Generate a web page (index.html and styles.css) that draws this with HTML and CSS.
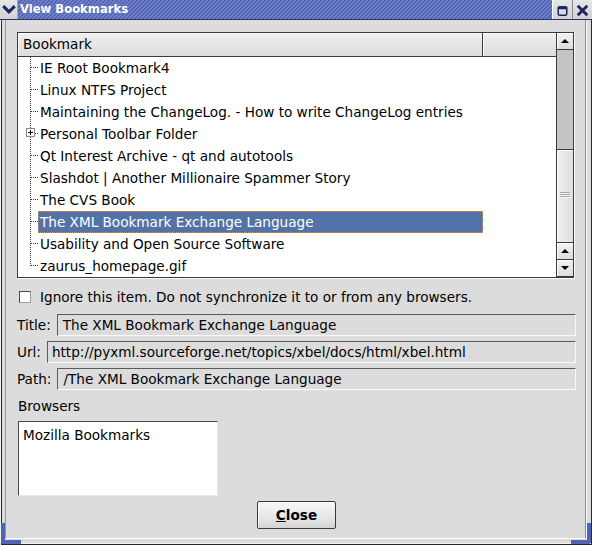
FILE: index.html
```html
<!DOCTYPE html>
<html>
<head>
<meta charset="utf-8">
<title>View Bookmarks</title>
<link rel="stylesheet" href="styles.css">
</head>
<body>
<div class="window">
  <div class="titlebar">
    <div class="tb-btn menu">
      <svg width="18" height="19" viewBox="0 0 18 19"><path d="M4.5 7 L9.5 12 L14.5 7" fill="none" stroke="#1c2660" stroke-width="3.2" stroke-linecap="square"/></svg>
    </div>
    <div class="title">View Bookmarks</div>
    <div class="tb-btn max">
      <svg width="20" height="19" viewBox="0 0 20 19"><rect x="5.5" y="7" width="9" height="8.5" rx="1.5" fill="none" stroke="#1c2660" stroke-width="1.6"/><rect x="5" y="6.2" width="10" height="3" rx="1" fill="#1c2660"/></svg>
    </div>
    <div class="tb-btn close">
      <svg width="20" height="19" viewBox="0 0 20 19"><path d="M6 6.5 L14 14.5 M14 6.5 L6 14.5" stroke="#1c2660" stroke-width="3" stroke-linecap="square"/></svg>
    </div>
  </div>
  <div class="frame">
    <div class="client">
      <div class="listview">
        <div class="lv-main">
          <div class="lv-header">
            <div class="col col1">Bookmark</div>
            <div class="col col2"></div>
          </div>
          <div class="lv-rows">
            <div class="row"><span class="branch"></span><span class="label">IE Root Bookmark4</span></div>
            <div class="row"><span class="branch"></span><span class="label">Linux NTFS Project</span></div>
            <div class="row"><span class="branch"></span><span class="label">Maintaining the ChangeLog. - How to write ChangeLog entries</span></div>
            <div class="row"><span class="branch"><span class="expander"></span></span><span class="label">Personal Toolbar Folder</span></div>
            <div class="row"><span class="branch"></span><span class="label">Qt Interest Archive - qt and autotools</span></div>
            <div class="row"><span class="branch"></span><span class="label">Slashdot | Another Millionaire Spammer Story</span></div>
            <div class="row"><span class="branch"></span><span class="label">The CVS Book</span></div>
            <div class="row"><span class="branch"></span><span class="label sel">The XML Bookmark Exchange Language</span></div>
            <div class="row"><span class="branch"></span><span class="label">Usability and Open Source Software</span></div>
            <div class="row last"><span class="branch"></span><span class="label">zaurus_homepage.gif</span></div>
          </div>
        </div>
        <div class="scrollbar">
          <div class="sb-btn"><span class="tri-up"></span></div>
          <div class="sb-track">
            <div class="sb-thumb"><span class="grip"></span></div>
          </div>
          <div class="sb-btn"><span class="tri-up"></span></div>
          <div class="sb-btn"><span class="tri-down"></span></div>
        </div>
      </div>

      <div class="check-row"><span class="checkbox"></span><span>Ignore this item. Do not synchronize it to or from any browsers.</span></div>

      <div class="field-row first"><span class="flabel">Title:</span><div class="field">The XML Bookmark Exchange Language</div></div>
      <div class="field-row"><span class="flabel">Url:</span><div class="field url">http://pyxml.sourceforge.net/topics/xbel/docs/html/xbel.html</div></div>
      <div class="field-row"><span class="flabel">Path:</span><div class="field">/The XML Bookmark Exchange Language</div></div>

      <div class="browsers-label">Browsers</div>
      <div class="browsers-box"><div class="bitem">Mozilla Bookmarks</div></div>

      <div class="buttons"><button class="btn"><u>C</u>lose</button></div>
    </div>
  </div>
  <div class="grip-corner left"></div>
  <div class="grip-corner right"></div>
</div>
</body>
</html>
```

FILE: styles.css
```css
* { box-sizing: border-box; }

body {
  margin: 0;
  font-family: "DejaVu Sans", "Noto Sans", sans-serif;
  font-size: 13.6px;
  color: #000;
  background: #dcdcdc;
}

.window {
  width: 592px;
  height: 545px;
  display: flex;
  flex-direction: column;
  position: relative;
  overflow: hidden;
  background: #dcdcdc;
}

/* ---------- title bar ---------- */
.titlebar {
  height: 20px;
  flex: none;
  display: flex;
  border-bottom: 1px solid #2c3468;
  background: repeating-linear-gradient(135deg, #5565b5 0 1.9px, #7181c9 1.9px 2.83px);
}

.tb-btn {
  height: 19px;
  display: flex;
  align-items: center;
  justify-content: center;
  background: linear-gradient(#e6e6e6, #d2d2d2);
}
.tb-btn svg { display: block; }
.tb-btn.menu { width: 18px; border-right: 1px solid #9aa0c8; }
.tb-btn.max { width: 20px; border-left: 1px solid #fff; }
.tb-btn.close { width: 20px; border-left: 1px solid #8a8a8a; }

.title {
  flex: 1;
  color: #fff;
  font-weight: bold;
  font-size: 11.6px;
  line-height: 19px;
  padding-left: 2px;
}

/* ---------- frame ---------- */
.frame {
  flex: 1;
  display: flex;
  padding: 0 6px 6px 5px;
  box-shadow: inset 1px 0 #f2f2f2, inset 2px 0 #2a2a2a, inset -1px 0 #2a2a2a, inset 0 -1px #2a2a2a, inset 0 -2px #f2f2f2;
}

.client {
  flex: 1;
  display: flex;
  flex-direction: column;
  align-items: flex-start;
  padding: 12px 9px 0 11px;
  border-left: 1px solid #9a9a9a;
  border-right: 1px solid #8a8a8a;
  border-bottom: 1px solid #ffffff;
  box-shadow: 1px 0 #ffffff;
}

/* ---------- list view ---------- */
.listview {
  width: 557px;
  height: 246px;
  display: flex;
  flex: none;
  border: 1px solid #3a3a3a;
  background: #fff;
  box-shadow: 1px 1px 0 #fbfbfb;
}

.lv-main {
  width: 538px;
  display: flex;
  flex-direction: column;
}

.lv-header {
  height: 24px;
  display: flex;
  border-bottom: 1px solid #3a3a3a;
}
.col {
  background: linear-gradient(#f0f0f0, #e4e4e4 60%, #dcdcdc);
  box-shadow: inset 1px 1px #fafafa;
  line-height: 23px;
  padding-left: 5px;
}
.col1 { width: 465px; border-right: 1px solid #3a3a3a; }
.col2 { flex: 1; }

.lv-rows { display: flex; flex-direction: column; }

.row {
  height: 22px;
  display: flex;
  align-items: stretch;
}

.branch {
  width: 20px;
  flex: none;
  position: relative;
  background-image:
    repeating-linear-gradient(to bottom, #3a3a3a 0 1px, transparent 1px 2px),
    repeating-linear-gradient(to right, #3a3a3a 0 1px, transparent 1px 2px);
  background-size: 1px 100%, 8px 1px;
  background-position: 12px 0, 13px 10px;
  background-repeat: no-repeat;
}
.row.last .branch { background-size: 1px 11px, 8px 1px; }

.expander {
  position: absolute;
  left: 8px;
  top: 5px;
  width: 9px;
  height: 9px;
  border: 1px solid #8c8c8c;
  background: #fff;
}
.expander::before, .expander::after {
  content: "";
  position: absolute;
  background: #000;
}
.expander::before { left: 1px; top: 3px; width: 5px; height: 1px; }
.expander::after { left: 3px; top: 1px; width: 1px; height: 5px; }

.label {
  width: 445px;
  padding-left: 2px;
  line-height: 22px;
  white-space: nowrap;
}
.label.sel {
  background: #5373a8;
  color: #fff;
  outline: 1px dotted #d09a5c;
  outline-offset: -1px;
}

/* ---------- scrollbar ---------- */
.scrollbar {
  flex: 1;
  display: flex;
  flex-direction: column;
  border-left: 1px solid #3a3a3a;
  background: #c4c4c4;
}
.sb-btn {
  height: 17px;
  flex: none;
  display: flex;
  align-items: center;
  justify-content: center;
  background: linear-gradient(#f2f2f2, #dcdcdc);
  border-bottom: 1px solid #3a3a3a;
  box-shadow: inset 1px 1px #fff;
}
.sb-track {
  flex: 1;
  display: flex;
  flex-direction: column;
  justify-content: flex-end;
  border-bottom: 1px solid #3a3a3a;
}
.sb-thumb {
  height: 93px;
  display: flex;
  align-items: center;
  justify-content: center;
  background: linear-gradient(to right, #f0f0f0, #dedede);
  border-top: 1px solid #3a3a3a;
  box-shadow: inset 1px 1px #fff;
}
.grip {
  width: 10px;
  height: 6px;
  margin-top: -2px;
  background: repeating-linear-gradient(to bottom, #a8a8a8 0 1px, #f4f4f4 1px 2px);
}
.tri-up {
  width: 0; height: 0;
  border-left: 4px solid transparent;
  border-right: 4px solid transparent;
  border-bottom: 4px solid #000;
}
.tri-down {
  width: 0; height: 0;
  border-left: 4px solid transparent;
  border-right: 4px solid transparent;
  border-top: 4px solid #000;
}

/* ---------- checkbox ---------- */
.check-row {
  margin-top: 9px;
  height: 20px;
  display: flex;
  align-items: center;
  gap: 9px;
  padding-left: 2px;
  white-space: nowrap;
}
.checkbox {
  width: 12px;
  height: 12px;
  background: #fff;
  border: 1px solid;
  border-color: #4a4a4a #9a9a9a #9a9a9a #4a4a4a;
}

/* ---------- fields ---------- */
.field-row {
  width: 100%;
  margin-top: 5px;
  height: 22px;
  display: flex;
  align-items: center;
  gap: 6px;
}
.field-row.first { margin-top: 7px; }
.flabel { white-space: nowrap; }
.field {
  flex: 1;
  height: 22px;
  line-height: 20px;
  padding-left: 5px;
  border: 1px solid;
  border-color: #5a5a5a #fafafa #fafafa #5a5a5a;
  white-space: nowrap;
  overflow: hidden;
}
.field.url { padding-left: 4px; }

/* ---------- browsers ---------- */
.browsers-label {
  margin-top: 7px;
  line-height: 18px;
  padding-left: 1px;
}
.browsers-box {
  margin-top: 6px;
  margin-left: 1px;
  width: 200px;
  height: 75px;
  background: #fff;
  border: 1px solid;
  border-color: #4a4a4a #e8e8e8 #e8e8e8 #4a4a4a;
  padding: 2px 4px;
}
.bitem { line-height: 22px; }

/* ---------- buttons ---------- */
.buttons {
  width: 100%;
  margin-top: 5px;
  display: flex;
  justify-content: center;
}
.btn {
  width: 79px;
  height: 28px;
  font-family: inherit;
  font-size: 13.6px;
  font-weight: bold;
  color: #000;
  border: 1px solid #3a3a3a;
  border-radius: 2px;
  background: linear-gradient(#f8f8f8, #e2e2e2 70%, #d4d4d4);
  box-shadow: inset 1px 1px #fff;
  padding: 0;
}

/* ---------- resize grips (overlay decorations) ---------- */
.grip-corner {
  position: absolute;
  bottom: 1px;
  width: 20px;
  height: 21px;
}
.grip-corner.left {
  left: 1px;
  border-left: 4px solid #5363b3;
  border-bottom: 4px solid #5363b3;
  border-bottom-left-radius: 3px;
}
.grip-corner.right {
  right: 1px;
  border-right: 4px solid #5363b3;
  border-bottom: 4px solid #5363b3;
  border-bottom-right-radius: 3px;
}
```
